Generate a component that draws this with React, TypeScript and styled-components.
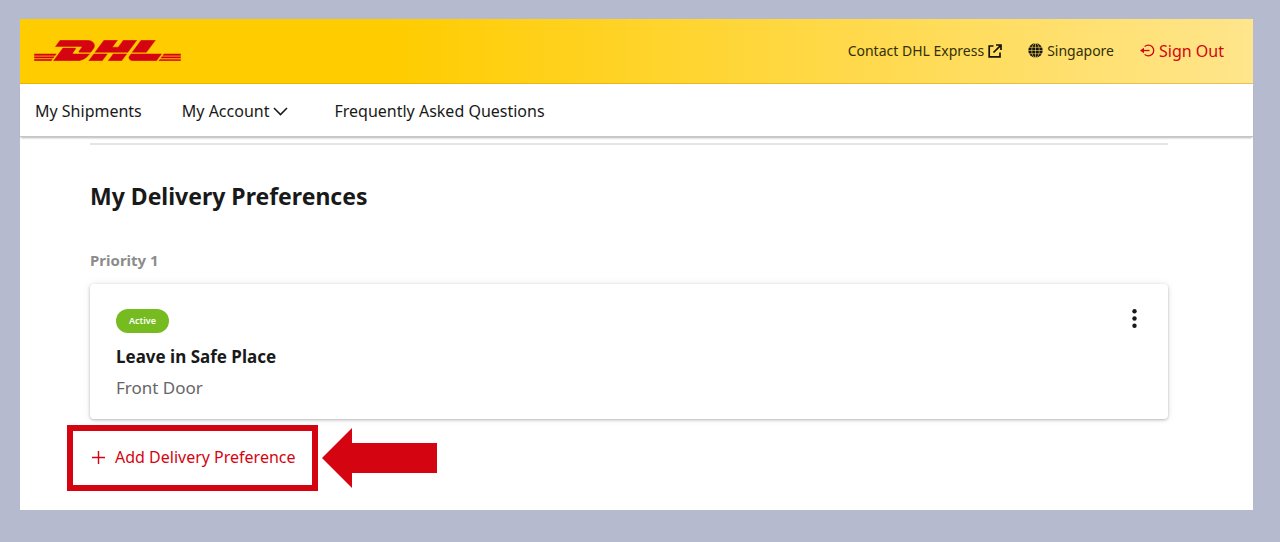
import React from "react";
import styled, { createGlobalStyle } from "styled-components";
import { FaDhl } from "react-icons/fa";

const RED = "#d40511";

const GlobalStyle = createGlobalStyle`
  *, *::before, *::after { box-sizing: border-box; }
  body {
    margin: 0;
    background: #b5bacf;
    color: #191919;
    font-family: "Noto Sans", "Open Sans", sans-serif;
    font-size: 16px;
    line-height: 24px;
  }
  h1, h2, h3, p, ul { margin: 0; padding: 0; }
  button { font: inherit; color: inherit; background: none; border: 0; padding: 0; cursor: pointer; }
  a { color: inherit; text-decoration: none; }
  svg { display: block; flex: none; }
`;

const Page = styled.div`
  padding: 19px 27px 32px 20px;
`;

const Panel = styled.div`
  background: #fff;
`;

const Header = styled.header`
  display: flex;
  align-items: center;
  justify-content: space-between;
  height: 65px;
  padding: 0 29px 1px 14px;
  background: linear-gradient(90deg, #fc0 0%, #fc0 30%, #ffe58c 100%);
  border-bottom: 1px solid rgba(190, 150, 0, 0.4);
`;

const Logo = styled.a`
  display: block;
  color: ${RED};

  svg {
    width: 147px;
    height: 21px;
  }
`;

const Utilities = styled.div`
  display: flex;
  align-items: center;
  gap: 26px;
`;

const UtilityLink = styled.a`
  display: flex;
  align-items: center;
  gap: 4px;
  font-size: 14px;
  color: #333006;
`;

const SignOut = styled.button`
  display: flex;
  align-items: center;
  gap: 4px;
  color: ${RED};
`;

const Nav = styled.nav`
  display: flex;
  align-items: center;
  height: 53px;
  padding: 2px 15px 0;
  border-bottom: 1px solid #c6c6c6;
  box-shadow: 0 2px 2px -1px rgba(0, 0, 0, 0.3);
`;

const NavList = styled.ul`
  display: flex;
  gap: 40px;
  list-style: none;

  li:last-child { margin-left: 6px; }
`;

const NavItem = styled.a`
  display: flex;
  align-items: center;
  gap: 4px;
`;

const Content = styled.main`
  padding: 6px 85px 19px 70px;
`;

const Rule = styled.hr`
  height: 2px;
  margin: 0;
  border: 0;
  background: #e5e5e5;
`;

const Title = styled.h1`
  margin-top: 35px;
  font-size: 23px;
  line-height: 32px;
`;

const Priority = styled.h2`
  margin-top: 36px;
  font-size: 15px;
  line-height: 24px;
  color: #8c8c8c;
`;

const Card = styled.section`
  display: flex;
  justify-content: space-between;
  align-items: flex-start;
  margin-top: 12px;
  padding: 25px 26px 19px;
  border-radius: 4px;
  box-shadow: 0 1px 3px rgba(0, 0, 0, 0.25), 0 0 8px rgba(0, 0, 0, 0.08);
`;

const Badge = styled.span`
  display: inline-block;
  padding: 0 13px;
  border-radius: 12px;
  background: #76bc21;
  color: #fff;
  font-size: 9px;
  font-weight: 600;
  line-height: 24px;
  vertical-align: top;
`;

const PlaceName = styled.h3`
  margin-top: 12px;
  font-size: 17px;
  line-height: 24px;
`;

const PlaceDetail = styled.p`
  margin-top: 7px;
  font-size: 17px;
  line-height: 24px;
  color: #666;
`;

const MenuButton = styled.button`
  width: 16px;
  height: 20px;
`;

const Callout = styled.div`
  display: flex;
  align-items: center;
  gap: 4px;
  margin: 6px 0 0 -23px;
`;

const Highlight = styled.div`
  border: 6px solid ${RED};
  padding: 14px 16px 16px 19px;
`;

const AddButton = styled.button`
  display: flex;
  align-items: center;
  gap: 10px;
  color: ${RED};
`;

const ExternalIcon = () => (
  <svg width="14" height="14" viewBox="0 0 14 14" fill="none" stroke="#15130a" strokeWidth="1.700" aria-hidden="true">
    <path d="M5.500 2H1.200v10.800H12V8.500" />
    <path d="M8 1H13v5M12.700 1.300L5.500 8.500" />
  </svg>
);

const GlobeIcon = () => (
  <svg width="15" height="15" viewBox="0 0 15 15" aria-hidden="true">
    <circle cx="7.500" cy="7.500" r="7.200" fill="#15130a" />
    <g fill="none" stroke="#ffdf62" strokeWidth="0.600">
      <path d="M7.500 0v15M1 4.300h13M0 7.500h15M1 10.700h13" />
      <ellipse cx="7.500" cy="7.500" rx="3.800" ry="7.200" />
    </g>
  </svg>
);

const SignOutIcon = () => (
  <svg width="15" height="13" viewBox="0 0 15 13" fill="none" stroke={RED} strokeWidth="1.300" aria-hidden="true">
    <path d="M4.600 2.600A5.400 5.400 0 1 1 4.600 10.400" />
    <path d="M2 6.500H9.500" />
    <path d="M4 3.700L0 6.500L4 9.300Z" fill={RED} stroke="none" />
  </svg>
);

const ChevronIcon = () => (
  <svg width="15" height="9" viewBox="0 0 15 9" fill="none" stroke="#191919" strokeWidth="1.500" aria-hidden="true">
    <path d="M1 1l6.500 6.600L14 1" />
  </svg>
);

const PlusIcon = () => (
  <svg width="13" height="13" viewBox="0 0 13 13" stroke={RED} strokeWidth="1.400" aria-hidden="true">
    <path d="M6.500 0v13M0 6.500h13" />
  </svg>
);

const DotsIcon = () => (
  <svg width="16" height="20" viewBox="0 0 16 20" fill="#191919" aria-hidden="true">
    <circle cx="8.500" cy="2.200" r="2.200" />
    <circle cx="8.500" cy="9.500" r="2.200" />
    <circle cx="8.500" cy="16.800" r="2.200" />
  </svg>
);

const ArrowIcon = () => (
  <svg width="115" height="60" viewBox="0 0 115 60" fill={RED} aria-hidden="true">
    <path d="M0 30L30 0V15H115V45H30V60Z" />
  </svg>
);

export default function App() {
  return (
    <>
      <GlobalStyle />
      <Page>
        <Panel>
          <Header>
            <Logo href="#" aria-label="DHL home">
              <FaDhl viewBox="0 210 640 92" strokeWidth={2} />
            </Logo>
            <Utilities>
              <UtilityLink href="#">
                Contact DHL Express
                <ExternalIcon />
              </UtilityLink>
              <UtilityLink href="#">
                <GlobeIcon />
                Singapore
              </UtilityLink>
              <SignOut type="button">
                <SignOutIcon />
                Sign Out
              </SignOut>
            </Utilities>
          </Header>
          <Nav>
            <NavList>
              <li><NavItem href="#">My Shipments</NavItem></li>
              <li><NavItem href="#">My Account<ChevronIcon /></NavItem></li>
              <li><NavItem href="#">Frequently Asked Questions</NavItem></li>
            </NavList>
          </Nav>
          <Content>
            <Rule />
            <Title>My Delivery Preferences</Title>
            <Priority>Priority 1</Priority>
            <Card>
              <div>
                <Badge>Active</Badge>
                <PlaceName>Leave in Safe Place</PlaceName>
                <PlaceDetail>Front Door</PlaceDetail>
              </div>
              <MenuButton type="button" aria-label="Preference options">
                <DotsIcon />
              </MenuButton>
            </Card>
            <Callout>
              <Highlight>
                <AddButton type="button">
                  <PlusIcon />
                  Add Delivery Preference
                </AddButton>
              </Highlight>
              <ArrowIcon />
            </Callout>
          </Content>
        </Panel>
      </Page>
    </>
  );
}
